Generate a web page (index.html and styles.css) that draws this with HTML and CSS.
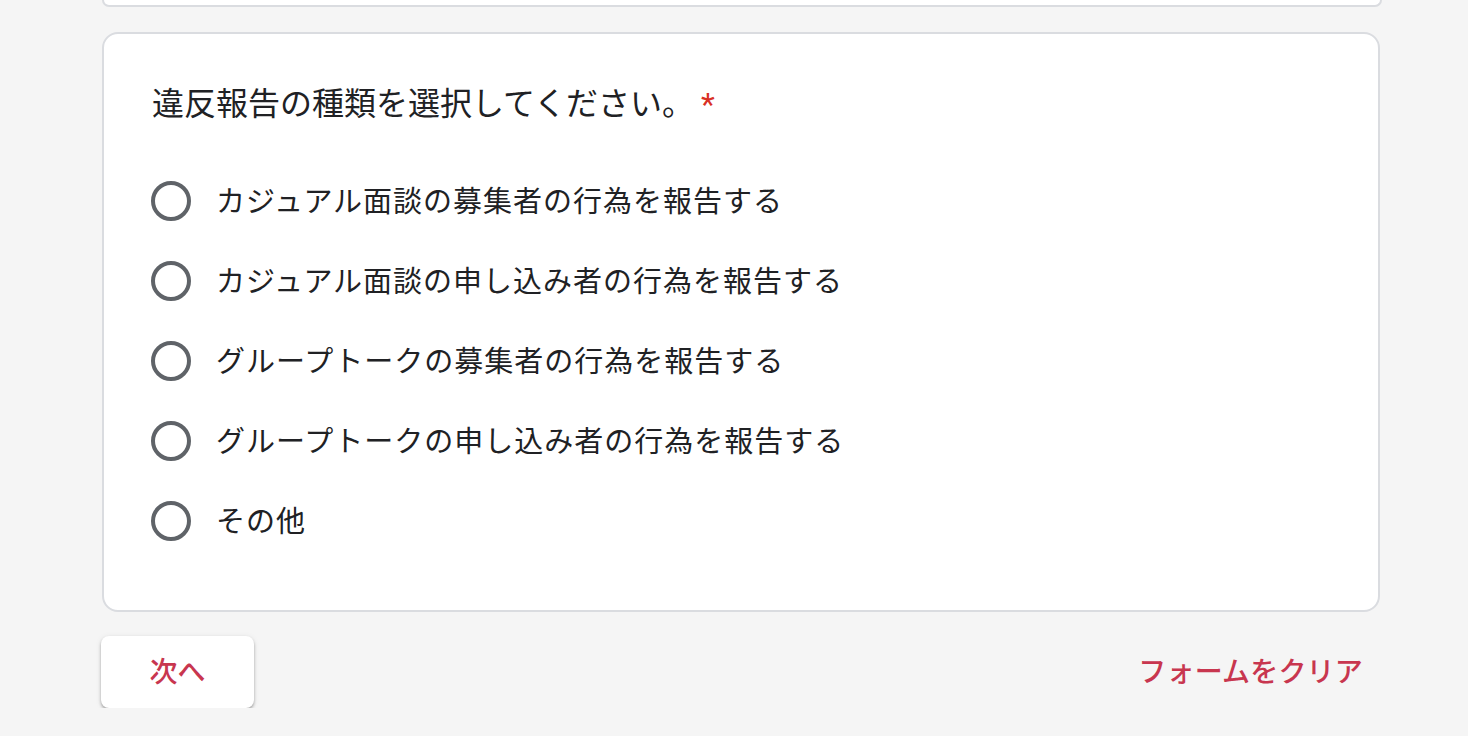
FILE: index.html
```html
<!DOCTYPE html>
<html lang="ja">
<head>
<meta charset="utf-8">
<title>違反報告</title>
<link rel="stylesheet" href="styles.css">
</head>
<body>
<div class="page">
  <div class="card-stub"></div>
  <div class="card">
    <div class="question">違反報告の種類を選択してください。<span class="required">*</span></div>
    <div class="options">
      <label class="option"><span class="radio"></span><span class="option-text">カジュアル面談の募集者の行為を報告する</span></label>
      <label class="option"><span class="radio"></span><span class="option-text">カジュアル面談の申し込み者の行為を報告する</span></label>
      <label class="option"><span class="radio"></span><span class="option-text">グループトークの募集者の行為を報告する</span></label>
      <label class="option"><span class="radio"></span><span class="option-text">グループトークの申し込み者の行為を報告する</span></label>
      <label class="option"><span class="radio"></span><span class="option-text">その他</span></label>
    </div>
  </div>
  <div class="footer">
    <button class="next-btn">次へ</button>
    <button class="clear-btn">フォームをクリア</button>
  </div>
</div>
</body>
</html>
```
FILE: styles.css
```css
html, body {
  margin: 0;
  padding: 0;
  background: #f5f5f5;
  font-family: "Noto Sans CJK JP", "Noto Sans", sans-serif;
  color: #202124;
}
.page {
  width: 1280px;
  margin-left: 101px;
  display: flex;
  flex-direction: column;
}
.card-stub {
  height: 5px;
  margin-left: 1px;
  width: 1276px;
  background: #fff;
  border: 2px solid #dadce0;
  border-top: none;
  border-radius: 0 0 16px 16px;
}
.card {
  margin-top: 25px;
  margin-left: 1px;
  width: 1278px;
  box-sizing: border-box;
  background: #fff;
  border: 2px solid #dadce0;
  border-radius: 16px;
  padding: 43px 48px 49px 48px;
}
.question {
  font-size: 32px;
  line-height: 48px;
  letter-spacing: 0;
  color: #202124;
}
.required {
  color: #d93025;
  padding-left: 7px;
  font-family: "Roboto", "Liberation Sans", sans-serif;
  font-size: 32px;
}
.options {
  margin-top: 33px;
  display: flex;
  flex-direction: column;
}
.option {
  height: 80px;
  display: flex;
  align-items: center;
}
.radio {
  width: 40px;
  height: 40px;
  box-sizing: border-box;
  border: 4px solid #5f6368;
  border-radius: 50%;
  flex: none;
  margin-left: -1px;
}
.option-text {
  margin-left: 25px;
  padding-bottom: 4px;
  font-size: 29px;
  letter-spacing: 1px;
  color: #202124;
}
.footer {
  margin-top: 24px;
  display: flex;
  justify-content: space-between;
  align-items: center;
}
.next-btn {
  width: 153px;
  height: 72px;
  border: none;
  background: #fff;
  border-radius: 8px;
  box-shadow: 0 2px 3px rgba(0,0,0,0.3), 0 1px 6px rgba(0,0,0,0.08);
  font-family: "Noto Sans CJK JP", sans-serif;
  font-size: 28px;
  font-weight: 500;
  color: #c8364f;
  letter-spacing: 0;
  padding: 0 0 4px 0;
}
.clear-btn {
  border: none;
  background: transparent;
  font-family: "Noto Sans CJK JP", sans-serif;
  font-size: 28px;
  font-weight: 500;
  color: #c8364f;
  padding: 0 0 4px 0;
  margin-right: 18px;
  letter-spacing: 0.2px;
}
```
